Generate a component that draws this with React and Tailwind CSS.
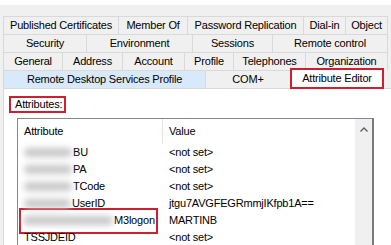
import React from "react";

function Tab({ w, children, last, className = "" }) {
  return (
    <div
      className={`${w} h-full shrink-0 flex items-center justify-center border-l border-t border-[#d9d9d9] ${last ? "border-r" : ""} ${className}`}
    >
      <span className="leading-none whitespace-nowrap">{children}</span>
    </div>
  );
}

function Blur({ w }) {
  return (
    <span className={`inline-block ${w} h-[9px] align-middle mr-[1px]`}>
      <span className="block w-full h-full bg-[#c8c8c8] blur-[3px] rounded-full" />
    </span>
  );
}

function Row({ name, value, children }) {
  return (
    <div className="flex h-[17px] items-center">
      <div className="w-[145px] shrink-0 pl-[6px] flex items-center whitespace-nowrap">
        {children}
        {name}
      </div>
      <div className="pl-[6px] whitespace-nowrap">{value}</div>
    </div>
  );
}

export default function App() {
  return (
    <div className="w-[391px] h-[245px] overflow-hidden bg-[#f0f0f0] font-['Liberation_Sans',Arial,sans-serif] text-[11px] tracking-[-0.2px] text-black flex flex-col">
      <div className="h-[16px] shrink-0 flex flex-col">
        <div className="h-[5px] bg-white" />
        <div className="flex-1 bg-[#f0f0f0]" />
      </div>
      <div className="flex h-[18px] ml-[3px] shrink-0">
        <Tab w="w-[115px]">Published Certificates</Tab>
        <Tab w="w-[69px]">Member Of</Tab>
        <Tab w="w-[116px]">Password Replication</Tab>
        <Tab w="w-[42px]">Dial-in</Tab>
        <Tab w="w-[43px]" last>Object</Tab>
      </div>
      <div className="flex h-[18px] ml-[3px] shrink-0">
        <Tab w="w-[83px]">Security</Tab>
        <Tab w="w-[106px]">Environment</Tab>
        <Tab w="w-[80px]">Sessions</Tab>
        <Tab w="w-[116px]" last>Remote control</Tab>
      </div>
      <div className="flex h-[18px] ml-[3px] shrink-0">
        <Tab w="w-[59px]">General</Tab>
        <Tab w="w-[60px]">Address</Tab>
        <Tab w="w-[62px]">Account</Tab>
        <Tab w="w-[49px]">Profile</Tab>
        <Tab w="w-[72px]">Telephones</Tab>
        <Tab w="w-[83px]" last>Organization</Tab>
      </div>
      <div className="flex h-[18px] ml-[3px] shrink-0 relative z-10">
        <Tab w="w-[202px]" className="bg-[#d8eaf9]">Remote Desktop Services Profile</Tab>
        <Tab w="w-[85px]">COM+</Tab>
        <div className="w-[94px] h-[21px] -mt-[2px] shrink-0 bg-white border-2 border-[#cc1f2f] flex items-center justify-center">
          <span className="leading-none whitespace-nowrap">Attribute Editor</span>
        </div>
      </div>
      <div className="flex-1 ml-[3px] bg-white border-l border-t border-[#d9d9d9] flex flex-col">
        <div className="ml-[5px] mt-[7px] w-[57px] h-[17px] border-2 border-[#cc1f2f] flex items-center pl-[4px]">
          <span className="leading-none whitespace-nowrap">Attributes:</span>
        </div>
        <div className="ml-[13px] mt-[5px] w-[357px] flex-1 border border-[#828790] border-r-2 border-r-[#7a7a7a] flex">
          <div className="flex-1 flex flex-col">
            <div className="flex h-[25px] items-center">
              <div className="w-[145px] h-full shrink-0 pl-[6px] flex items-center border-r border-[#e5e5e5]">Attribute</div>
              <div className="pl-[6px]">Value</div>
            </div>
            <Row name="BU" value="<not set>"><Blur w="w-[48px]" /></Row>
            <Row name="PA" value="<not set>"><Blur w="w-[48px]" /></Row>
            <Row name="TCode" value="<not set>"><Blur w="w-[48px]" /></Row>
            <Row name="UserID" value="jtgu7AVGFEGRmmjIKfpb1A=="><Blur w="w-[47px]" /></Row>
            <div className="flex h-[17px] items-center">
              <div className="w-[145px] shrink-0 pl-[1px] flex items-center whitespace-nowrap">
                <div className="h-[26px] w-[139px] border-2 border-[#cc1f2f] flex items-center pl-[2px]">
                  <Blur w="w-[90px]" />
                  M3logon
                </div>
              </div>
              <div className="pl-[6px] whitespace-nowrap">MARTINB</div>
            </div>
            <Row name="TSSJDEID" value="<not set>" />
          </div>
          <div className="w-[17px] shrink-0 bg-[#f0f0f0] flex justify-center pt-[8px]">
            <svg width="8" height="5" viewBox="0 0 8 5">
              <path d="M0.5 4.5 L4 1 L7.5 4.5" fill="none" stroke="#606060" strokeWidth="1.4" />
            </svg>
          </div>
        </div>
      </div>
    </div>
  );
}
